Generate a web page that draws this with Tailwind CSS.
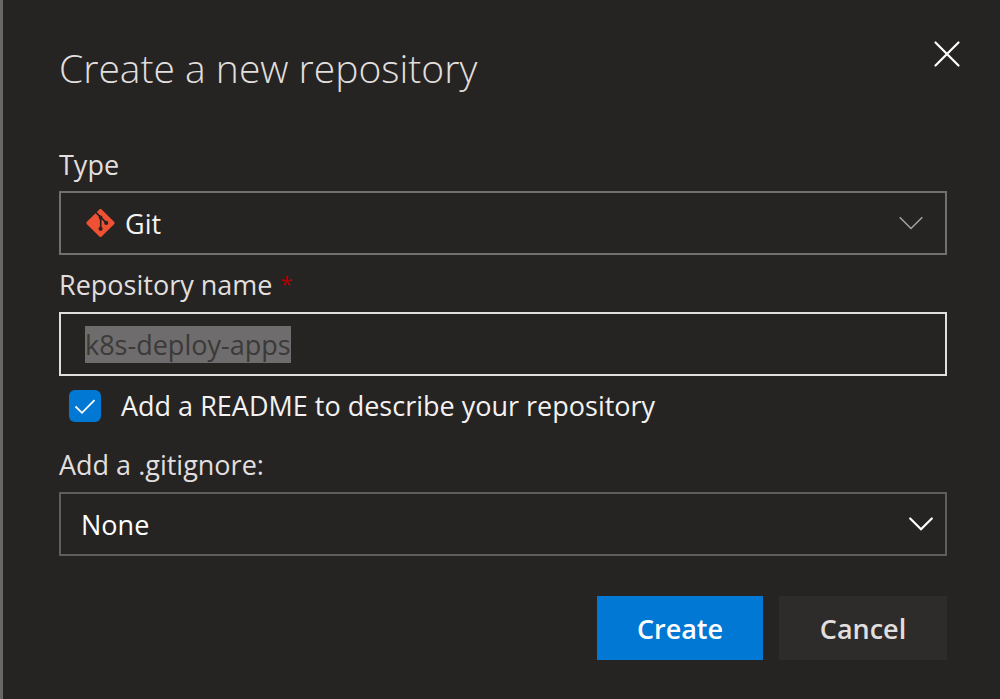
<!DOCTYPE html>
<html lang="en">
<head>
<meta charset="utf-8">
<meta name="viewport" content="width=device-width, initial-scale=1">
<title>Create a new repository</title>
<script src="https://cdn.jsdelivr.net/npm/@tailwindcss/browser@4"></script>
</head>
<body class="bg-[#252423]">
<main class="min-h-screen border-l-3 border-[#686766] bg-[#252423] pt-10 pr-[53px] pb-9 pl-14 font-['Open_Sans','Noto_Sans',sans-serif] text-[27px] leading-9 text-[#e1dfdd]">
  <form>
    <header class="flex items-start justify-between">
      <h1 class="text-[39px] leading-14 font-light">Create a new repository</h1>
      <button type="button" aria-label="Close" class="-mt-1.5 -mr-6 p-1 text-white">
        <svg class="size-10" viewBox="0 0 40 40" fill="none" stroke="currentColor" stroke-width="2.200" stroke-linecap="round"><path d="M8.500 4.500L31.500 27.500M31.500 4.500L8.500 27.500"/></svg>
      </button>
    </header>

    <div class="mt-[51px] flex flex-col gap-2">
      <label for="type">Type</label>
      <div class="relative">
        <select id="type" class="block h-16 w-full appearance-none border-2 border-[#72706e] bg-[#252423] pt-0.5 pl-16 text-[#f3f2f1] outline-none">
          <option>Git</option>
        </select>
        <svg class="pointer-events-none absolute top-1/2 left-[27px] size-[29px] -translate-y-1/2" viewBox="0 0 29 29" fill="none">
          <rect x="4.100" y="4.100" width="20.800" height="20.800" rx="1.600" transform="rotate(45 14.500 14.500)" fill="#f05133"/>
          <path d="M9.300 3.400L20.300 14.400M14.700 9V20.300" stroke="#252423" stroke-width="1.700"/>
          <circle cx="14.600" cy="9" r="1.900" fill="#252423"/><circle cx="20.200" cy="14.400" r="2.100" fill="#252423"/><circle cx="14.600" cy="20.300" r="2.100" fill="#252423"/>
        </svg>
        <svg class="pointer-events-none absolute top-1/2 right-6 h-4 w-6 -translate-y-1/2" viewBox="0 0 24 16" fill="none" stroke="#a5a3a1" stroke-width="1.500"><path d="M.7 2.200L12 13.500L23.300 2.200"/></svg>
      </div>
    </div>

    <div class="mt-3 flex flex-col gap-[9px]">
      <label for="name" class="flex gap-2">Repository name <span class="text-[22px] leading-8 text-[#b00000]">*</span></label>
      <input id="name" type="text" value="k8s-deploy-apps" autofocus spellcheck="false" class="block h-16 w-full border-2 border-[#e1dfdd] bg-[#252423] px-6 outline-none selection:bg-[#6e6c6c] selection:text-[#3b3a39]">
    </div>

    <div class="mt-3 ml-2.5 flex items-center gap-5 text-[#f3f2f1]">
      <span class="relative my-0.5 size-8 shrink-0">
        <input id="readme" type="checkbox" checked class="peer block size-8 appearance-none rounded-md bg-[#323130] checked:bg-[#0078d4]">
        <svg class="pointer-events-none absolute inset-0 hidden size-8 peer-checked:block" viewBox="0 0 32 32" fill="none" stroke="#fff" stroke-width="1.800"><path d="M6.500 16.500L13 22.800L25.500 10.200"/></svg>
      </span>
      <label for="readme">Add a README to describe your repository</label>
    </div>

    <div class="mt-[23px] flex flex-col gap-[9px]">
      <label for="ignore">Add a .gitignore:</label>
      <div class="relative">
        <select id="ignore" class="block h-16 w-full appearance-none border-2 border-[#605e5c] bg-[#252423] pt-0.5 pl-5 text-white outline-none">
          <option>None</option>
        </select>
        <svg class="pointer-events-none absolute top-1/2 right-3.5 h-4 w-6 -translate-y-1/2" viewBox="0 0 24 16" fill="none" stroke="#fff" stroke-width="2.200" stroke-linecap="round"><path d="M1.200 2.500L12 13.300L22.800 2.500"/></svg>
      </div>
    </div>

    <div class="mt-10 flex justify-end gap-4 font-semibold">
      <button type="submit" class="h-16 w-[166px] bg-[#0078d4] pt-0.5 text-white">Create</button>
      <button type="button" class="h-16 w-[168px] bg-[#2d2c2b] pt-0.5 text-[#e1dfdd]">Cancel</button>
    </div>
  </form>
</main>
<script>
  const nameInput = document.getElementById('name');
  nameInput.focus();
  nameInput.select();
</script>
</body>
</html>
